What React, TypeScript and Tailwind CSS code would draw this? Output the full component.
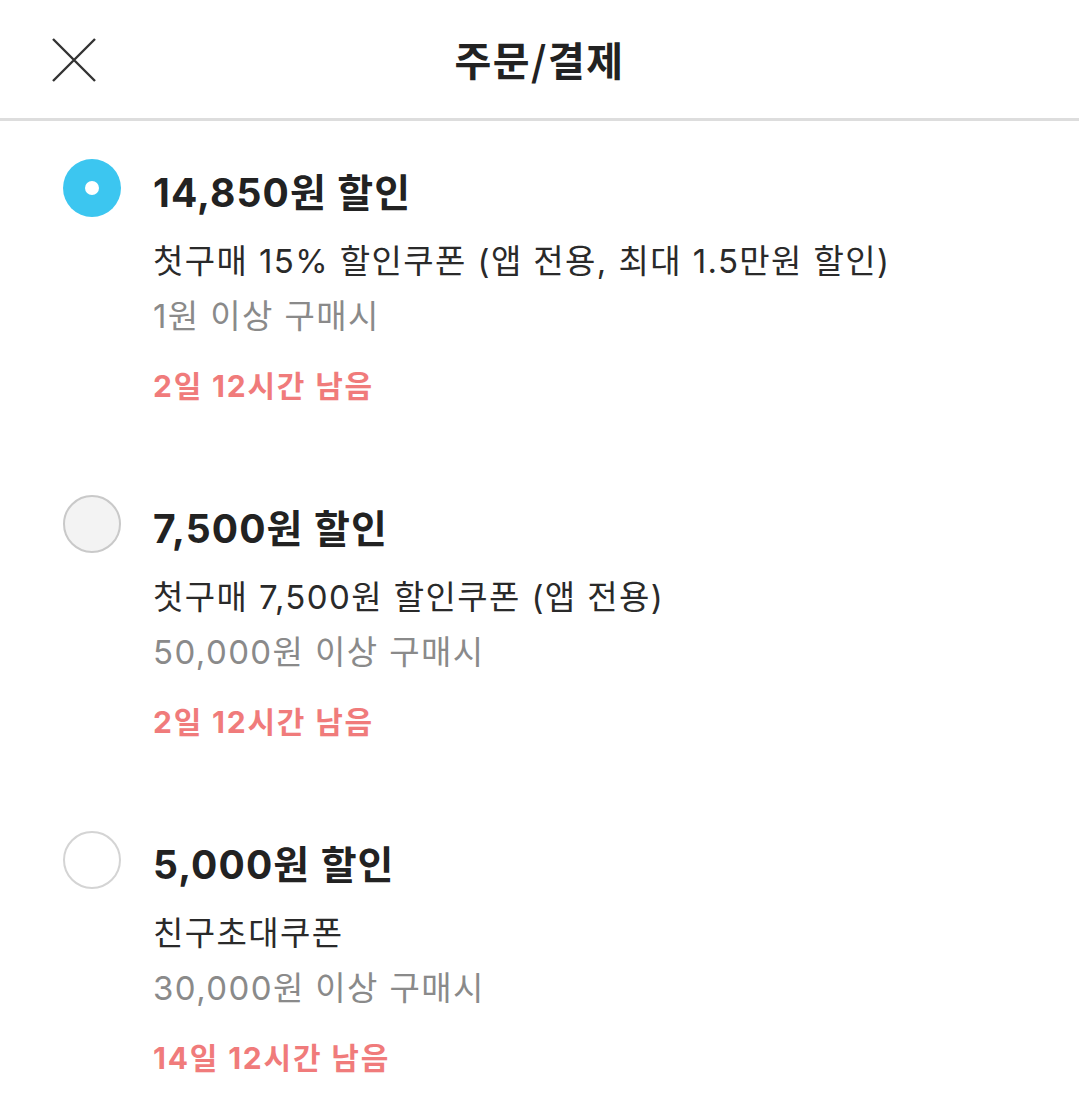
type Coupon = {
  id: number;
  amount: string;
  name: string;
  condition: string;
  remain: string;
  selected?: boolean;
  disabled?: boolean;
};

const coupons: Coupon[] = [
  {
    id: 1,
    amount: '14,850원 할인',
    name: '첫구매 15% 할인쿠폰 (앱 전용, 최대 1.5만원 할인)',
    condition: '1원 이상 구매시',
    remain: '2일 12시간 남음',
    selected: true,
  },
  {
    id: 2,
    amount: '7,500원 할인',
    name: '첫구매 7,500원 할인쿠폰 (앱 전용)',
    condition: '50,000원 이상 구매시',
    remain: '2일 12시간 남음',
    disabled: true,
  },
  {
    id: 3,
    amount: '5,000원 할인',
    name: '친구초대쿠폰',
    condition: '30,000원 이상 구매시',
    remain: '14일 12시간 남음',
  },
];

function Radio({ selected, disabled }: { selected?: boolean; disabled?: boolean }) {
  if (selected) {
    return (
      <div className="w-[58px] h-[58px] shrink-0 rounded-full bg-[#3cc6f0] flex items-center justify-center">
        <div className="w-[14px] h-[14px] rounded-full bg-white" />
      </div>
    );
  }
  return (
    <div
      className={
        disabled
          ? 'w-[58px] h-[58px] shrink-0 rounded-full border-2 border-[#c9c9c9] bg-[#f3f3f3]'
          : 'w-[58px] h-[58px] shrink-0 rounded-full border-2 border-[#d4d4d4] bg-white'
      }
    />
  );
}

export default function App() {
  return (
    <div className="w-[1079px] h-[1093px] bg-white overflow-hidden font-['Inter','Noto_Sans_CJK_KR',sans-serif]">
      <header className="relative h-[118px] flex items-center justify-center border-b-[3px] border-[#dddddd] box-content">
        <button className="absolute left-[52px] top-[38px] w-[44px] h-[44px] text-[#333]">
          <svg viewBox="0 0 44 44" className="w-[44px] h-[44px]" fill="none" stroke="currentColor" strokeWidth={2.4}>
            <path d="M1 1 L43 43 M43 1 L1 43" />
          </svg>
        </button>
        <h1 className="text-[40px] font-bold text-[#222] tracking-[1.5px] font-['Noto_Sans_CJK_KR',sans-serif]">주문/결제</h1>
      </header>

      <ul className="pt-[38px]">
        {coupons.map(c => (
          <li key={c.id} className="flex items-start pl-[63px] h-[336px]">
            <Radio selected={c.selected} disabled={c.disabled} />
            <div className="ml-[32px] mt-[8px]">
              <p className="text-[39px] leading-[52px] font-bold text-[#222] tracking-[1.1px]">{c.amount}</p>
              <p className="mt-[15px] text-[33px] leading-[55px] text-[#2a2a2a] tracking-[1.4px]">{c.name}</p>
              <p className="text-[33px] leading-[55px] text-[#8a8a8a] tracking-[1.4px]">{c.condition}</p>
              <p className="mt-[18px] text-[30px] leading-[48px] font-bold text-[#f07b7b] tracking-[1.8px]">{c.remain}</p>
            </div>
          </li>
        ))}
      </ul>
    </div>
  );
}
